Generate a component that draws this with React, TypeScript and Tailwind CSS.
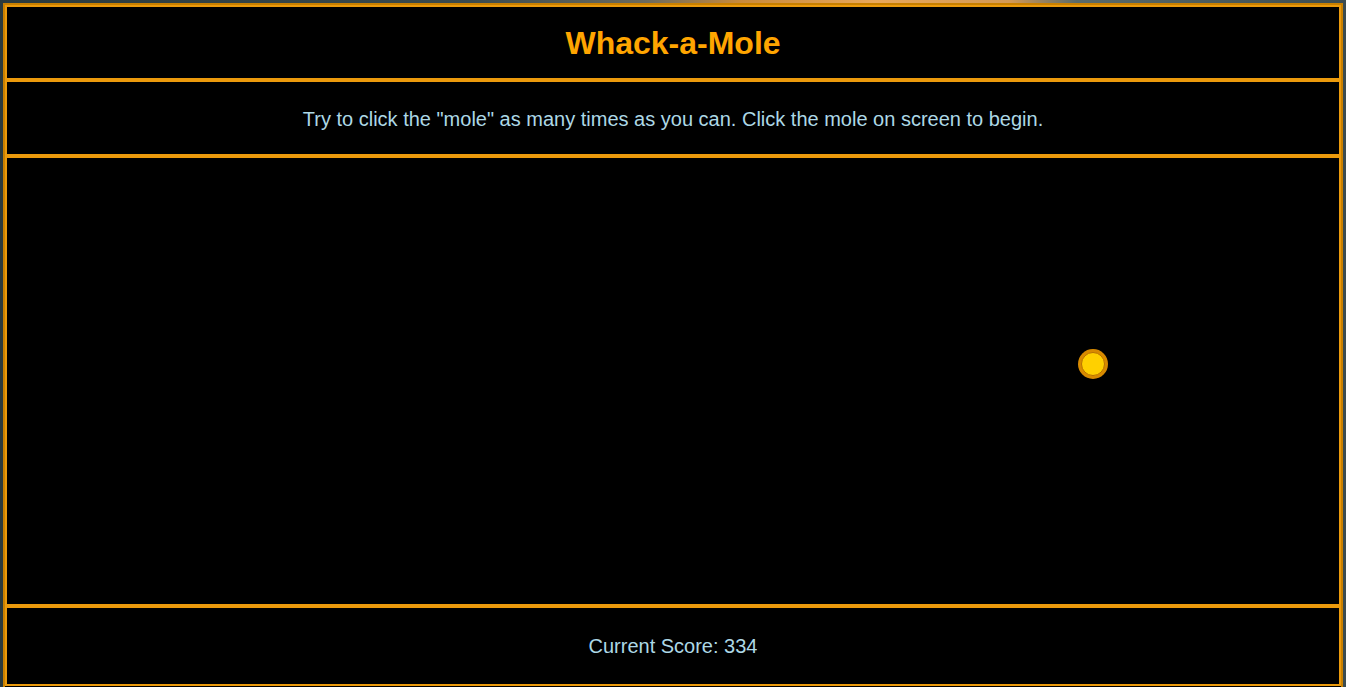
import React from "react";

export default function App() {
  return (
    <div
      className="w-[1346px] h-[687px] overflow-hidden pt-[3px] px-[3px]"
      style={{
        background:
          "linear-gradient(90deg, #2b3a3d 0%, #3a4a4e 35%, #6b6a5e 48%, #c98a3a 55%, #e9a85a 65%, #d49a55 75%, #5a6a6a 80%, #3c4c50 100%)",
        fontFamily: '"Liberation Sans", Arial, sans-serif',
      }}
    >
      <div className="bg-black border-2 border-[#c98000] flex flex-col h-[700px]">
        <div className="h-[75px] border-2 border-[#eb9a0c] flex items-center justify-center pt-[1px]">
          <h1 className="text-[32px] font-bold text-[#ffa500] leading-none">Whack-a-Mole</h1>
        </div>
        <div className="h-[76px] border-2 border-[#eb9a0c] flex items-center justify-center pt-[2px]">
          <p className="text-[20px] text-[#add8e6] leading-none">
            Try to click the "mole" as many times as you can. Click the mole on screen to begin.
          </p>
        </div>
        <div className="relative h-[450px] border-2 border-[#eb9a0c]">
          <div className="absolute left-[1071px] top-[191px] w-[30px] h-[30px] rounded-full bg-[#d88a00] p-[3px]">
            <div className="w-full h-full rounded-full bg-[#ffd000] border border-[#b87000]" />
          </div>
        </div>
        <div className="h-[80px] border-2 border-[#eb9a0c] flex items-center justify-center">
          <p className="text-[20px] text-[#add8e6] leading-none">Current Score: 334</p>
        </div>
      </div>
    </div>
  );
}
